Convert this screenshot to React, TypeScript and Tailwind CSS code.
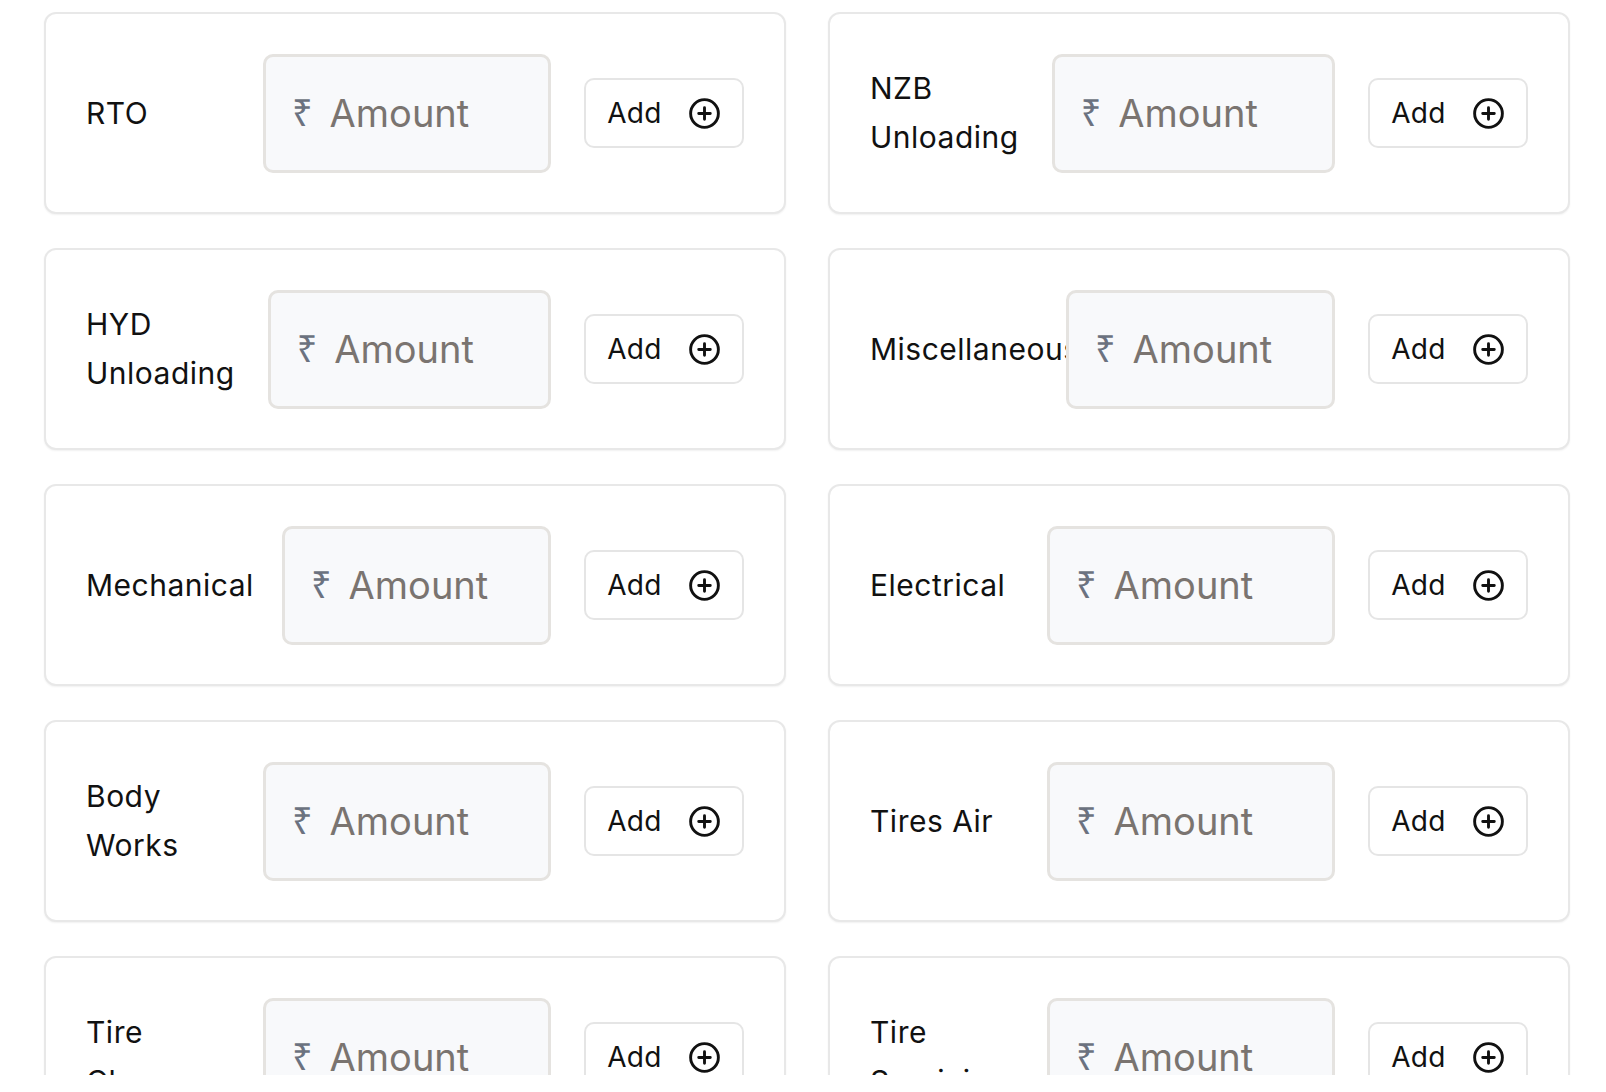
import React from 'react';

const expenses = [
  'RTO',
  'NZB Unloading',
  'HYD Unloading',
  'Miscellaneous',
  'Mechanical',
  'Electrical',
  'Body Works',
  'Tires Air',
  'Tire Changes',
  'Tire Servicing',
];

function AddCircleIcon() {
  return (
    <svg width="37" height="37" viewBox="0 0 512 512" fill="none" stroke="currentColor" strokeWidth="40" strokeLinecap="round">
      <circle cx="256" cy="256" r="192" />
      <path d="M256 176v160M336 256H176" />
    </svg>
  );
}

function ExpenseCard({ label }: { label: string }) {
  return (
    <div className="flex h-[202px] items-center gap-[33px] rounded-[12px] border-2 border-[#e8e8e8] bg-white px-[40px] shadow-[0_1px_2px_rgba(0,0,0,0.06)]">
      <div className="flex-1 max-w-[163px] text-[30px] leading-[49px] tracking-[0.5px] text-[#111]">{label}</div>
      <div className="flex h-[119px] w-[288px] min-w-0 items-center gap-[17px] rounded-[10px] border-[3px] border-[#e5e3e0] bg-[#f8f9fb] pl-[26px]">
        <span className="font-['Noto_Sans'] text-[36px] leading-none text-[#6b7280]">₹</span>
        <input
          placeholder="Amount"
          className="w-full min-w-0 bg-transparent text-[38px] text-[#111] outline-none placeholder:text-[#7a7470]"
        />
      </div>
      <button className="flex h-[70px] w-[160px] shrink-0 items-center justify-center gap-[24px] rounded-[10px] border-2 border-[#e5e5e5] bg-white pl-[2px] text-[28px] tracking-[0.3px] text-[#111]">
        <span>Add</span>
        <AddCircleIcon />
      </button>
    </div>
  );
}

export default function App() {
  return (
    <div className="h-[1092px] bg-white" style={{ fontFamily: 'Inter, "Noto Sans", sans-serif' }}>
      <div className="h-[1075px] overflow-hidden">
        <div className="grid grid-cols-2 gap-x-[42px] gap-y-[34px] pl-[44px] pr-[36px] pt-[12px]">
          {expenses.map((e) => (
            <ExpenseCard key={e} label={e} />
          ))}
        </div>
      </div>
    </div>
  );
}
